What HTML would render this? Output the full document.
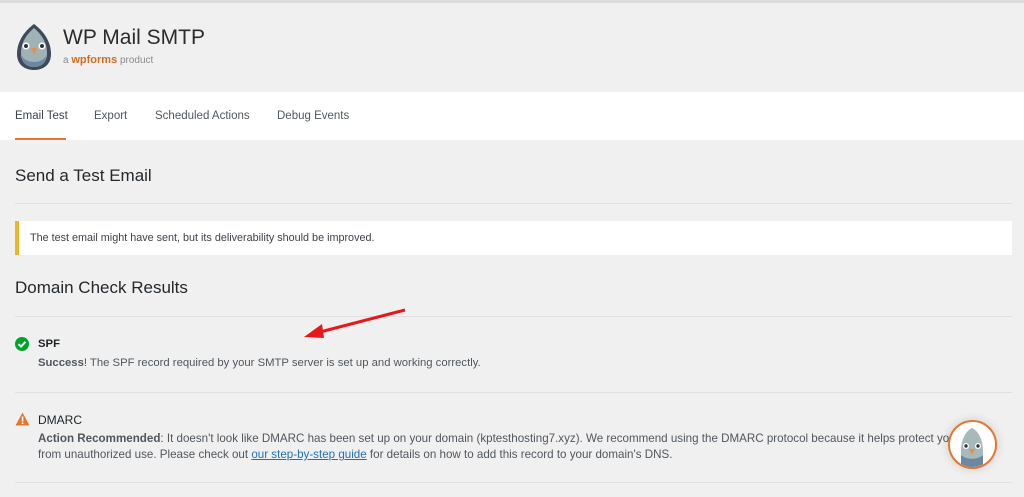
<!DOCTYPE html>
<html><head><meta charset="utf-8"><style>
*{margin:0;padding:0;box-sizing:border-box}
body{width:1024px;height:497px;overflow:hidden;background:#f0f0f0;font-family:"Liberation Sans",sans-serif;color:#3c434a;position:relative}
.abs{position:absolute}
.top{left:0;top:0;width:1024px;height:3px;background:#dcdcdc}
.nav{left:0;top:92px;width:1024px;height:48px;background:#fff}
.tab{top:110px;font-size:11.5px;color:#50575e}
.hr{left:15px;width:997px;height:1px;background:#e0e0e0}
h2{position:absolute;font-size:17px;font-weight:normal;color:#23282d}
.notice{left:15px;top:221px;width:997px;height:34px;background:#fff;border-left:4px solid #f0b429;font-size:10.8px;padding:11px 0 0 11px;color:#3c434a}
.t{font-size:11.3px;line-height:16px;color:#50575e}
a{color:#2271b1}
</style></head><body>
<div class="abs top"></div>
<svg class="abs" style="left:14px;top:22px" width="40" height="50" viewBox="0 0 40 50">
<path d="M20 2 C12 8 3 18 3 32 C3 43 11 48 20 48 C29 48 37 43 37 32 C37 18 28 8 20 2Z" fill="#3d4a5a"/>
<path d="M20 6 C13 12 7 20 7 31 C7 41 13 45 20 45 C27 45 33 41 33 31 C33 20 27 12 20 6Z" fill="#9fb3b6"/>
<path d="M8 34 C12 42 28 42 32 34 C32 41 27 45 20 45 C13 45 8 41 8 34Z" fill="#6c87a1"/>
<circle cx="12" cy="24" r="3.5" fill="#fff"/><circle cx="28" cy="24" r="3.5" fill="#fff"/>
<circle cx="12" cy="24" r="2" fill="#333"/><circle cx="28" cy="24" r="2" fill="#333"/>
<path d="M17 26 L23 26 L20 33Z" fill="#e98f44"/>
</svg>
<div class="abs" style="left:63px;top:26px;font-size:21px;color:#2b2b2b">WP Mail SMTP</div>
<div class="abs" style="left:63px;top:54px;font-size:10px;color:#8a8a8a">a <b style="color:#d36b22;font-size:11px">wpforms</b> product</div>
<div class="abs nav"></div>
<div class="abs tab" style="left:15px;color:#3c434a">Email Test</div>
<div class="abs" style="left:15px;top:138px;width:51px;height:2px;background:#e27730"></div>
<div class="abs tab" style="left:94px">Export</div>
<div class="abs tab" style="left:155px">Scheduled Actions</div>
<div class="abs tab" style="left:277px">Debug Events</div>
<h2 style="left:15px;top:166px">Send a Test Email</h2>
<div class="abs hr" style="top:203px"></div>
<div class="abs notice">The test email might have sent, but its deliverability should be improved.</div>
<h2 style="left:15px;top:278px">Domain Check Results</h2>
<div class="abs hr" style="top:316px"></div>
<svg class="abs" style="left:15px;top:337px" width="14" height="14"><circle cx="7" cy="7" r="7" fill="#00a32a"/><path d="M3.5 7.2 L6 9.6 L10.5 4.8" stroke="#fff" stroke-width="2" fill="none"/></svg>
<div class="abs t" style="left:38px;top:336px;color:#1d2327;font-weight:bold">SPF</div>
<div class="abs t" style="left:38px;top:355px"><b>Success</b>! The SPF record required by your SMTP server is set up and working correctly.</div>
<svg class="abs" style="left:300px;top:306px" width="110" height="36"><line x1="105" y1="4" x2="20" y2="26" stroke="#e8171a" stroke-width="3"/><path d="M4 31 L22 18 L24 32Z" fill="#e8171a"/></svg>
<div class="abs hr" style="top:392px"></div>
<svg class="abs" style="left:15px;top:412px" width="15" height="14"><path d="M7.5 0.5 L14.5 13.5 L0.5 13.5Z" fill="#e27730"/><rect x="6.8" y="4.5" width="1.5" height="5" fill="#fff"/><rect x="6.8" y="10.5" width="1.5" height="1.5" fill="#fff"/></svg>
<div class="abs t" style="left:38px;top:412px;color:#1d2327;font-size:12px">DMARC</div>
<div class="abs t" style="left:38px;top:431px;white-space:nowrap;font-size:11.6px"><b>Action Recommended</b>: It doesn't look like DMARC has been set up on your domain (kptesthosting7.xyz). We recommend using the DMARC protocol because it helps protect your</div>
<div class="abs t" style="left:38px;top:447px;white-space:nowrap;font-size:11.6px">from unauthorized use. Please check out <a href="#">our step-by-step guide</a> for details on how to add this record to your domain's DNS.</div>
<div class="abs hr" style="top:482px"></div>
<div class="abs" style="left:948px;top:420px;width:49px;height:49px;border-radius:50%;background:#fff;border:2px solid #e27730;box-shadow:0 0 10px rgba(0,0,0,.15);overflow:hidden">
<svg width="45" height="45" viewBox="0 0 45 45"><path d="M22 6 C14 10 11 20 11 30 L11 45 L33 45 L33 30 C33 20 30 10 22 6Z" fill="#a7b9bb"/><path d="M11 33 C16 38 28 38 33 33 L33 45 L11 45Z" fill="#6c87a1"/><circle cx="16" cy="24" r="3" fill="#fff"/><circle cx="28" cy="24" r="3" fill="#fff"/><circle cx="16" cy="24" r="1.7" fill="#333"/><circle cx="28" cy="24" r="1.7" fill="#333"/><path d="M19 27 L25 27 L22 33Z" fill="#e98f44"/></svg>
</div>
</body></html>
